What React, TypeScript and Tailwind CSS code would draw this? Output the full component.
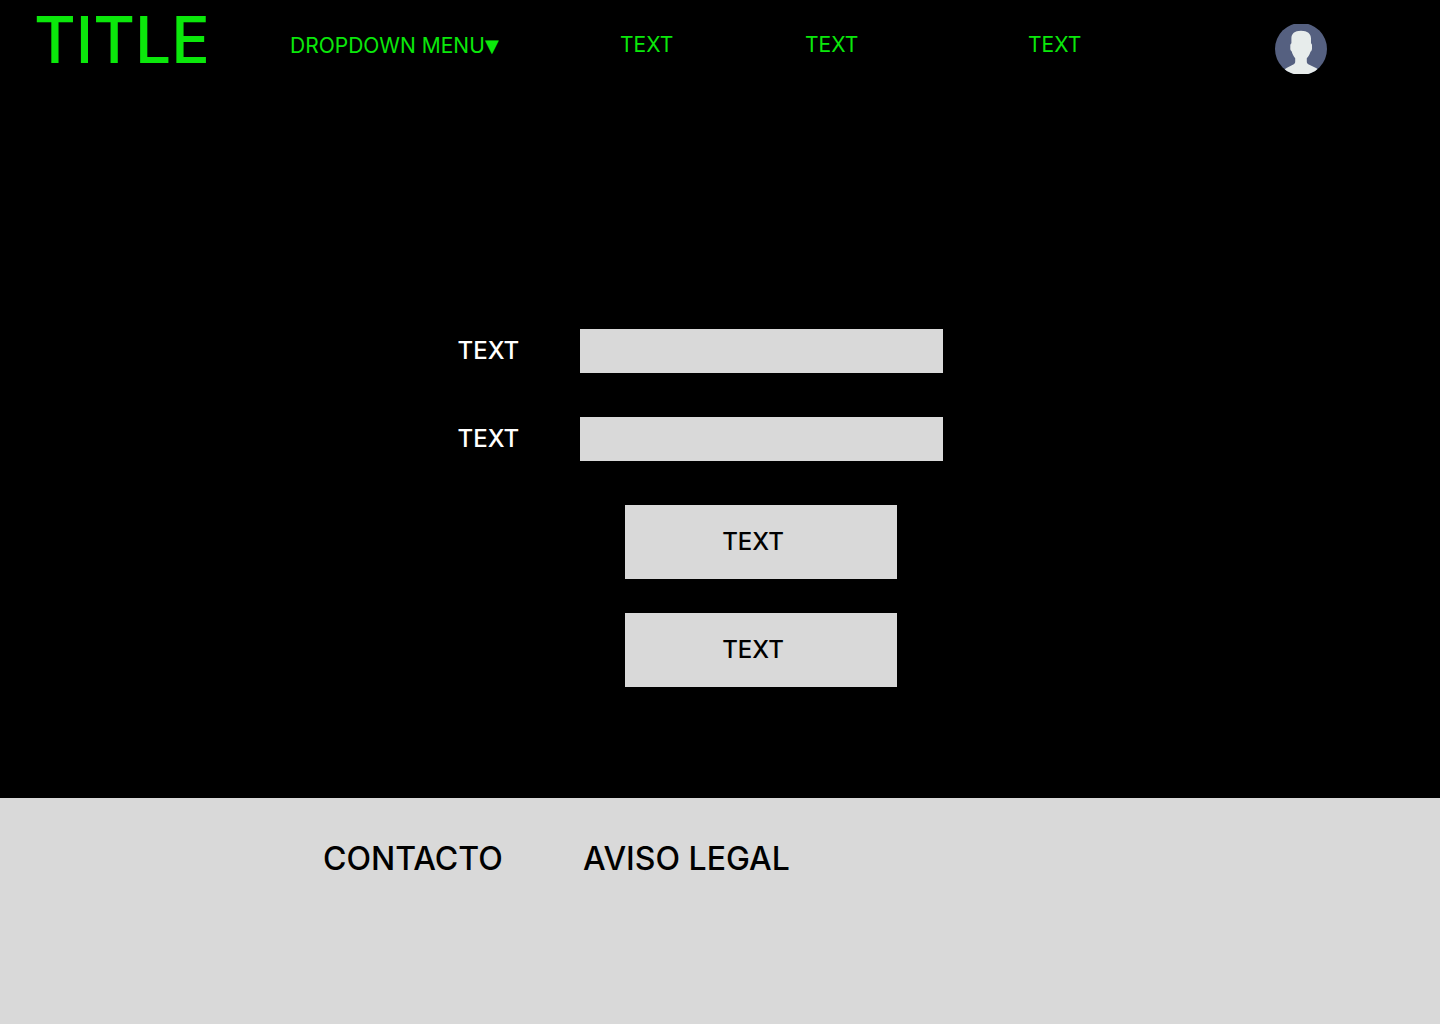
import React from "react";

const navLinks = ["first", "second", "third"];
const fields = ["field-one", "field-two"];
const actions = ["primary", "secondary"];

function Avatar() {
  return (
    <svg viewBox="0 0 52 50" className="h-[50px] w-[52px]" aria-hidden="true">
      <defs>
        <clipPath id="avatar-disc">
          <circle cx="26" cy="25" r="26" />
        </clipPath>
      </defs>
      <g clipPath="url(#avatar-disc)">
        <rect width="52" height="50" fill="#556080" />
        <path
          fill="#e7eceb"
          d="M26 6.7C32.5 6.7 36 9.5 36 14.5V19.3C36.8 19.8 37 20.5 37 21.5V24.5C37 26 36.4 27 35.5 27.8C34.8 30.2 33.6 32.5 31.8 34.3V37.5C31.8 39 32.4 39.8 33.8 40.5L40.5 43.8C42 44.5 43 45.3 44 46.5V50H9V45.8C10 45 10.8 44.4 12 43.8L18.3 40.5C19.6 39.8 20.2 39 20.2 37.5V34.3C18.6 32.5 17.3 30 16.7 27.6C15.8 26.6 15.3 25.8 15.3 24.5V21.5C15.3 20.5 15.8 19.8 16.4 19.3V14.5C16.4 9.5 19.5 6.7 26 6.7Z"
        />
      </g>
    </svg>
  );
}

export default function App() {
  return (
    <div className="flex min-h-screen flex-col bg-black font-['Inter',sans-serif] text-white">
      <header className="grid h-24 grid-cols-[256fr_330fr_185fr_223fr_247fr_165fr] items-start pl-[34px] text-[21px] leading-6 text-[#0be80b]">
        <h1 className="pt-2 text-[64px] leading-16 font-medium">TITLE</h1>
        <div className="flex items-center pt-[34px]">
          <select
            aria-label="Dropdown menu"
            className="cursor-pointer appearance-none bg-transparent"
          >
            <option>DROPDOWN MENU</option>
          </select>
          <span aria-hidden="true" className="font-['DejaVu_Sans',sans-serif] text-lg leading-6">
            ▼
          </span>
        </div>
        {navLinks.map((id) => (
          <a key={id} href={`#${id}`} className="justify-self-start pt-[33px]">
            TEXT
          </a>
        ))}
        <button type="button" aria-label="Profile" className="mt-6 cursor-pointer justify-self-start">
          <Avatar />
        </button>
      </header>

      <main className="flex flex-1 justify-center pt-[233px] pr-10 pb-[111px] text-2xl font-medium">
        <form className="flex w-[485px] flex-col gap-11" onSubmit={(e) => e.preventDefault()}>
          {fields.map((id) => (
            <div key={id} className="flex h-11 items-center justify-between">
              <label htmlFor={id}>TEXT</label>
              <input
                id={id}
                type="text"
                className="h-11 w-[363px] bg-[#d9d9d9] px-3 text-black outline-none"
              />
            </div>
          ))}
          <div className="flex w-[363px] flex-col items-center gap-[34px] self-end">
            {actions.map((id) => (
              <button
                key={id}
                type="button"
                className="h-[74px] w-[272px] cursor-pointer bg-[#d9d9d9] pr-4 text-black"
              >
                TEXT
              </button>
            ))}
          </div>
        </form>
      </main>

      <footer className="h-[226px] bg-[#d9d9d9] text-[32px] leading-10 font-medium text-black">
        <nav className="grid grid-cols-[323fr_260fr_857fr] pt-[41px]">
          <a href="#contacto" className="col-start-2 justify-self-start">
            CONTACTO
          </a>
          <a href="#aviso-legal" className="justify-self-start">
            AVISO LEGAL
          </a>
        </nav>
      </footer>
    </div>
  );
}
